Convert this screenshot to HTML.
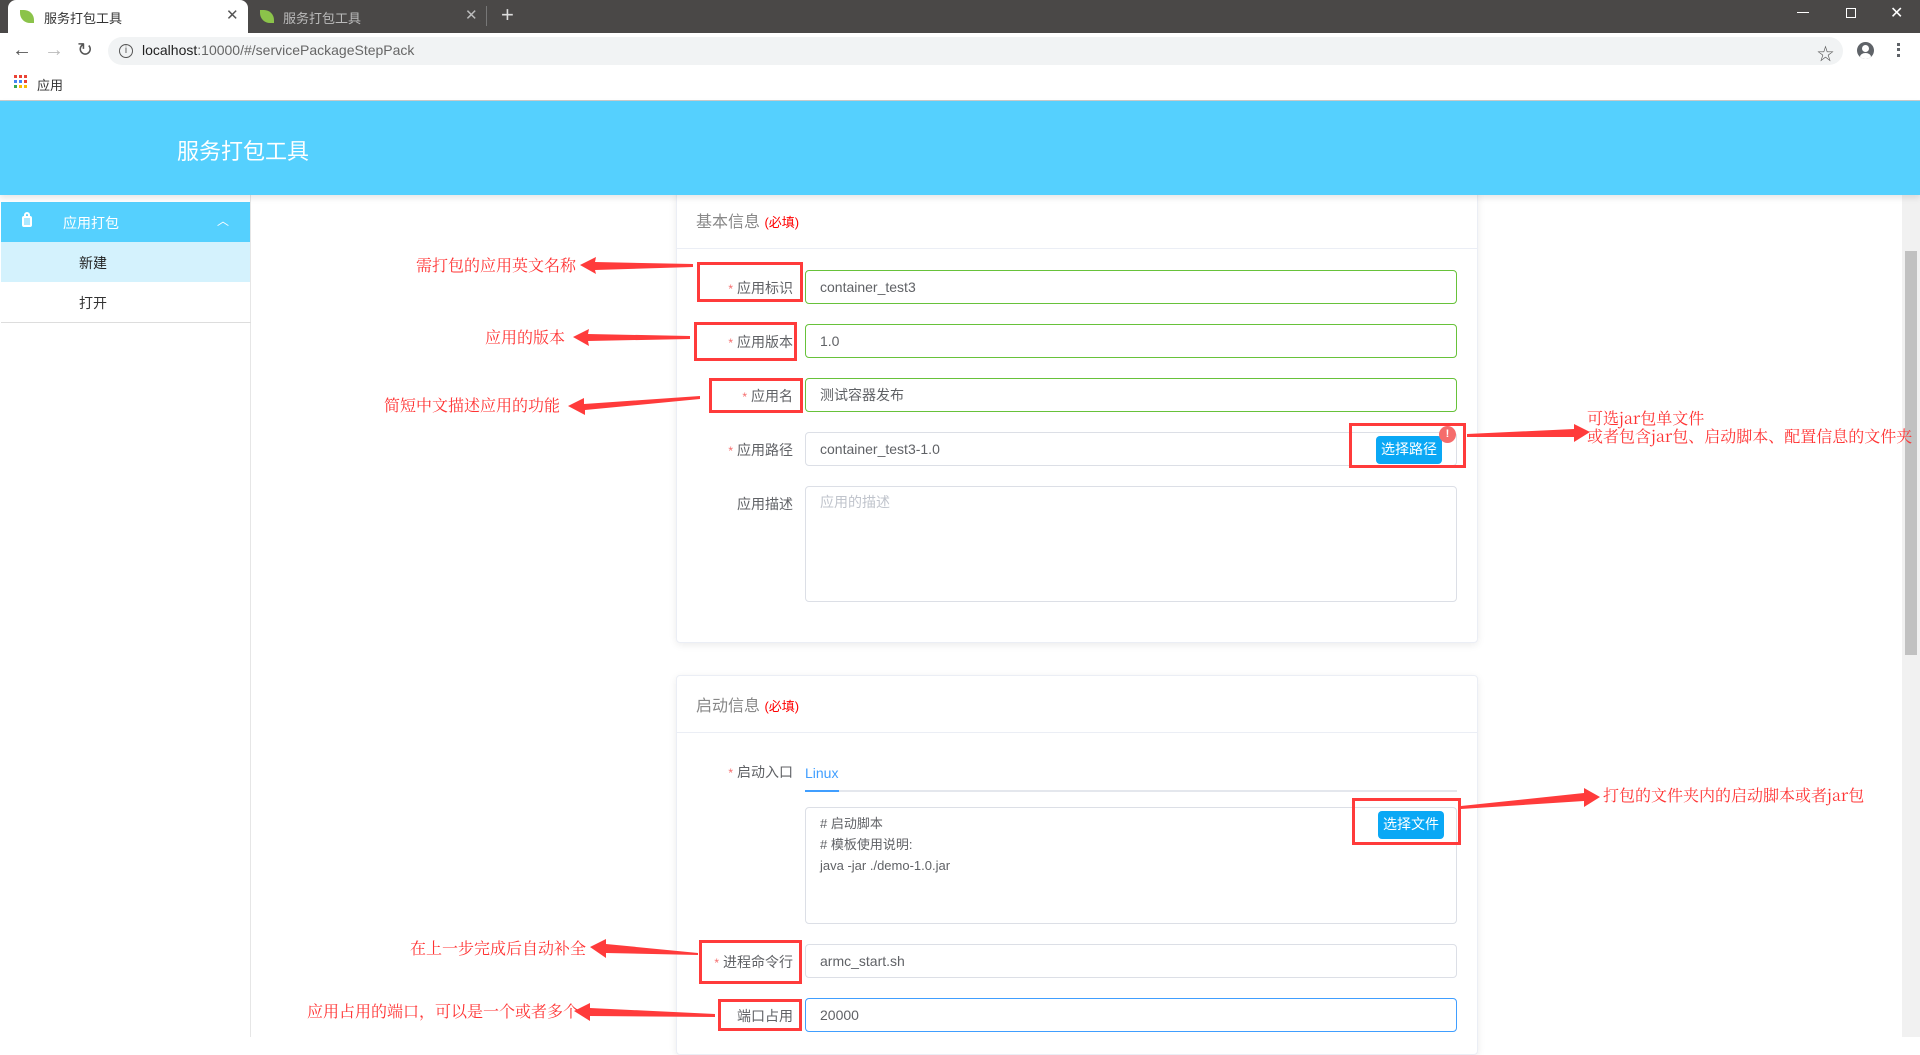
<!DOCTYPE html>
<html><head><meta charset="utf-8"><style>
*{margin:0;padding:0;box-sizing:border-box}
body{width:1920px;height:1037px;overflow:hidden;background:#fff;font-family:"Liberation Sans","Noto Sans CJK SC",sans-serif;position:relative}
.a{position:absolute}
.lbl{position:absolute;width:120px;text-align:right;font-size:14px;color:#606266}
.lbl b{color:#f56c6c;font-weight:normal;margin-right:4px;font-size:12px}
.inp{position:absolute;left:805px;width:652px;height:34px;border:1px solid #dcdfe6;border-radius:4px;font-size:14px;color:#606266;padding:0 14px;line-height:32px}
.g{border-color:#67c23a}
.ann{position:absolute;color:#ff3333;font-size:16px;font-family:"Noto Serif CJK SC","Liberation Serif",serif;white-space:nowrap;line-height:18px}
.rb{position:absolute;border:3px solid #ff3b3b}
.btn{position:absolute;background:#0aa8f5;color:#fff;font-size:14px;border-radius:4px;text-align:center;line-height:26px;width:66px;height:28px}
.card{position:absolute;left:676px;width:802px;background:#fff;border:1px solid #ebeef5;border-radius:4px;box-shadow:0 2px 8px rgba(0,0,0,.08)}
</style></head><body>
<!-- browser chrome -->
<div class="a" style="left:0;top:0;width:1920px;height:33px;background:#4a4847"></div>
<div class="a" style="left:8px;top:0;width:240px;height:33px;background:#fff;border-radius:8px 8px 0 0"></div>
<div class="a" style="left:20px;top:10px;width:14px;height:13px;background:#8bc34a;border-radius:0 10px 0 10px"></div>
<div class="a" style="left:44px;top:8px;font-size:13px;color:#333">服务打包工具</div>
<div class="a" style="left:226px;top:6px;font-size:15px;color:#555">✕</div>
<div class="a" style="left:260px;top:10px;width:14px;height:13px;background:#8bc34a;border-radius:0 10px 0 10px"></div>
<div class="a" style="left:283px;top:8px;font-size:13px;color:#bbb">服务打包工具</div>
<div class="a" style="left:465px;top:6px;font-size:15px;color:#bbb">✕</div>
<div class="a" style="left:486px;top:6px;width:1px;height:20px;background:#777"></div>
<div class="a" style="left:501px;top:2px;font-size:22px;color:#ddd">+</div>
<div class="a" style="left:1797px;top:12px;width:12px;height:1px;background:#fff"></div>
<div class="a" style="left:1846px;top:8px;width:10px;height:10px;border:1px solid #fff"></div>
<div class="a" style="left:1890px;top:3px;font-size:16px;color:#fff">✕</div>
<div class="a" style="left:12px;top:39px;font-size:20px;color:#555">←</div>
<div class="a" style="left:44px;top:39px;font-size:20px;color:#bbb">→</div>
<div class="a" style="left:77px;top:39px;font-size:19px;color:#555">↻</div>
<div class="a" style="left:108px;top:37px;width:1735px;height:28px;background:#f1f3f4;border-radius:14px"></div>
<div class="a" style="left:119px;top:44px;width:14px;height:14px;border:1.5px solid #555;border-radius:50%;font-size:10px;text-align:center;line-height:11px;color:#555">i</div>
<div class="a" style="left:142px;top:42px;font-size:14px;color:#222">localhost<span style="color:#666">:10000/#/servicePackageStepPack</span></div>
<div class="a" style="left:1817px;top:40px;font-size:17px;color:#555">☆</div>
<div class="a" style="left:1857px;top:42px;width:17px;height:17px;border-radius:50%;background:#5f6368;overflow:hidden"><div class="a" style="left:5px;top:3px;width:7px;height:7px;border-radius:50%;background:#fff"></div><div class="a" style="left:3px;top:11px;width:11px;height:8px;border-radius:50%;background:#fff"></div></div>
<div class="a" style="left:1897px;top:43px;width:3px;height:14px;border-left:3px dotted #5f6368"></div>
<svg class="a" style="left:14px;top:75px" width="14" height="14"><g>
<rect x="0" y="0" width="3" height="3" fill="#ea4335"/><rect x="5" y="0" width="3" height="3" fill="#ea4335"/><rect x="10" y="0" width="3" height="3" fill="#ea4335"/>
<rect x="0" y="5" width="3" height="3" fill="#4285f4"/><rect x="5" y="5" width="3" height="3" fill="#4285f4"/><rect x="10" y="5" width="3" height="3" fill="#ea4335"/>
<rect x="0" y="10" width="3" height="3" fill="#34a853"/><rect x="5" y="10" width="3" height="3" fill="#fbbc05"/><rect x="10" y="10" width="3" height="3" fill="#fbbc05"/></g></svg>
<div class="a" style="left:37px;top:75px;font-size:13px;color:#333">应用</div>
<div class="a" style="left:0;top:100px;width:1920px;height:1px;background:#ccc"></div>
<!-- sidebar -->
<div class="a" style="left:0;top:195px;width:251px;height:842px;border-right:1px solid #e6e6e6"></div>
<div class="a" style="left:1px;top:202px;width:249px;height:40px;background:#55d0fe"></div>
<div class="a" style="left:22px;top:216px;width:10px;height:11px;border:2px solid #fff;border-radius:2px;background:#aee8ff"></div>
<div class="a" style="left:24px;top:212px;width:6px;height:5px;border:2px solid #fff;border-bottom:none;border-radius:3px 3px 0 0"></div>
<div class="a" style="left:63px;top:213px;font-size:14px;color:#fff">应用打包</div>
<div class="a" style="left:217px;top:212px;font-size:12px;color:#fff">︿</div>
<div class="a" style="left:1px;top:242px;width:249px;height:40px;background:#d4f2fd"></div>
<div class="a" style="left:79px;top:253px;font-size:14px;color:#222">新建</div>
<div class="a" style="left:79px;top:293px;font-size:14px;color:#333">打开</div>
<div class="a" style="left:1px;top:322px;width:250px;height:1px;background:#ddd"></div>
<!-- scrollbar -->
<div class="a" style="left:1902px;top:195px;width:18px;height:842px;background:#f1f1f1"></div>
<div class="a" style="left:1905px;top:251px;width:12px;height:404px;background:#c1c1c1"></div>
<!-- card1 -->
<div class="card" style="top:190px;height:453px"></div>
<div class="a" style="left:676px;top:248px;width:802px;height:1px;background:#ebeef5"></div>
<div class="a" style="left:696px;top:208px;font-size:16px;color:#888">基本信息 <span style="color:#f00;font-size:13px">(必填)</span></div>
<div class="lbl" style="left:673px;top:278px"><b>*</b>应用标识</div>
<div class="inp g" style="top:270px">container_test3</div>
<div class="lbl" style="left:673px;top:332px"><b>*</b>应用版本</div>
<div class="inp g" style="top:324px">1.0</div>
<div class="lbl" style="left:673px;top:386px"><b>*</b>应用名</div>
<div class="inp g" style="top:378px">测试容器发布</div>
<div class="lbl" style="left:673px;top:440px"><b>*</b>应用路径</div>
<div class="inp" style="top:432px">container_test3-1.0</div>
<div class="btn" style="left:1376px;top:436px">选择路径</div>
<div class="a" style="left:1439px;top:426px;width:17px;height:17px;border-radius:50%;background:#f56c6c;color:#fff;font-size:11px;text-align:center;line-height:17px;font-weight:bold">!</div>
<div class="lbl" style="left:673px;top:494px">应用描述</div>
<div class="inp" style="top:486px;height:116px;color:#c0c4cc;line-height:30px">应用的描述</div>
<!-- header (above card) -->
<div class="a" style="left:0;top:101px;width:1920px;height:94px;background:#55d0fe;box-shadow:0 3px 6px rgba(0,0,0,.1)"></div>
<div class="a" style="left:177px;top:134px;font-size:22px;color:#fff">服务打包工具</div>
<!-- card2 -->
<div class="card" style="top:675px;height:380px"></div>
<div class="a" style="left:676px;top:732px;width:802px;height:1px;background:#ebeef5"></div>
<div class="a" style="left:696px;top:692px;font-size:16px;color:#888">启动信息 <span style="color:#f00;font-size:13px">(必填)</span></div>
<div class="lbl" style="left:673px;top:762px"><b>*</b>启动入口</div>
<div class="a" style="left:805px;top:765px;font-size:14px;color:#409eff">Linux</div>
<div class="a" style="left:805px;top:790px;width:652px;height:2px;background:#e4e7ed"></div>
<div class="a" style="left:805px;top:790px;width:34px;height:2px;background:#409eff"></div>
<div class="inp" style="top:807px;height:117px;line-height:21px;padding-top:5px;font-size:13px">#&nbsp;启动脚本<br>#&nbsp;模板使用说明:<br>java -jar ./demo-1.0.jar</div>
<div class="btn" style="left:1378px;top:811px">选择文件</div>
<div class="lbl" style="left:673px;top:952px"><b>*</b>进程命令行</div>
<div class="inp" style="top:944px">armc_start.sh</div>
<div class="lbl" style="left:673px;top:1006px">端口占用</div>
<div class="inp" style="top:998px;border-color:#409eff">20000</div>
<!-- red boxes -->
<div class="rb" style="left:697px;top:262px;width:106px;height:40px"></div>
<div class="rb" style="left:694px;top:322px;width:103px;height:39px"></div>
<div class="rb" style="left:709px;top:378px;width:94px;height:35px"></div>
<div class="rb" style="left:1349px;top:423px;width:117px;height:45px"></div>
<div class="rb" style="left:1352px;top:798px;width:109px;height:47px"></div>
<div class="rb" style="left:699px;top:940px;width:103px;height:44px"></div>
<div class="rb" style="left:718px;top:999px;width:84px;height:32px"></div>
<!-- annotations -->
<div class="ann" style="left:416px;top:256px">需打包的应用英文名称</div>
<div class="ann" style="left:485px;top:328px">应用的版本</div>
<div class="ann" style="left:384px;top:396px">简短中文描述应用的功能</div>
<div class="ann" style="left:1587px;top:409px">可选jar包单文件<br>或者包含jar包、启动脚本、配置信息的文件夹</div>
<div class="ann" style="left:1603px;top:786px">打包的文件夹内的启动脚本或者jar包</div>
<div class="ann" style="left:410px;top:939px">在上一步完成后自动补全</div>
<div class="ann" style="left:307px;top:1002px">应用占用的端口，可以是一个或者多个</div>
<svg class="a" style="left:0;top:0" width="1920" height="1037">
<g fill="#ff3b3b">
<polygon points="580,265 596,257 595,262 693,264 693,267 595,270 596,274"/>
<polygon points="573,337 589,329 588,334 690,336 690,339 588,341 589,346"/>
<polygon points="568,406 584,398 584,404 700,396 700,399 585,410 585,415"/>
<polygon points="1590,432 1574,424 1574,429 1467,434 1467,437 1574,437 1574,442"/>
<polygon points="1600,797 1584,788 1584,793 1461,806 1461,809 1584,801 1584,807"/>
<polygon points="590,947 606,939 606,944 698,953 698,955 606,953 606,958"/>
<polygon points="574,1011 590,1003 590,1008 715,1014 715,1017 590,1016 590,1021"/>
</g></svg>
</body></html>
